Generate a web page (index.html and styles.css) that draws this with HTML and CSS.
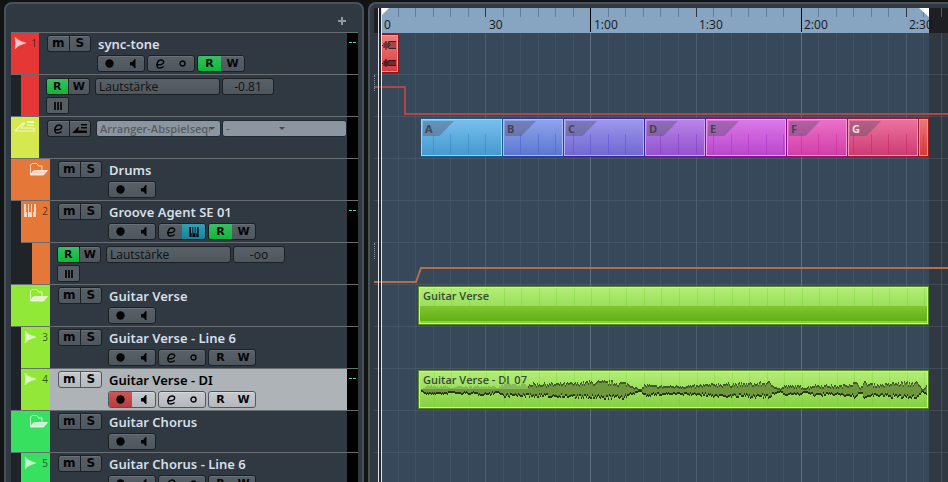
FILE: index.html
```html
<!DOCTYPE html>
<html lang="de">
<head>
<meta charset="utf-8">
<title>Projekt</title>
<link rel="stylesheet" href="styles.css">
</head>
<body>
<svg class="defs" aria-hidden="true">
  <symbol id="i-audio" viewBox="0 0 13 14"><path d="M1 1q3 4 11 6q-8 2-11 6q1.500-6 0-12z" fill="currentColor" stroke="rgba(255,255,255,.3)"/></symbol>
  <symbol id="i-folder" viewBox="0 0 19 14"><path d="M4.500 8.500L1.500 13V3l1.500-1.500h5L9.500 4H13v4.500" fill="none" stroke="currentColor"/><path d="M5.500 8.500h13L14.500 13h-13z" fill="currentColor" stroke="currentColor" stroke-linejoin="round"/></symbol>
  <symbol id="i-piano" viewBox="0 0 12 13"><path d="M0 0h2v8h1v5H0zM4 0h1v8h2V0h1v8h0v5H4zM10 0h2v13H9V8h1z" fill="currentColor"/></symbol>
  <symbol id="i-arr" viewBox="0 0 21 12"><path d="M1 11L9 3h2L7 8H20v3z" fill="none" stroke="currentColor" stroke-width="1.200" stroke-linejoin="round"/><path d="M13 1h7v2h-7zM13 4.500h7v1.500h-7z" fill="currentColor"/></symbol>
  <symbol id="i-arrs" viewBox="0 0 15 9"><path d="M0 9L6 3H7L6 6.500h9V9zM9 0h6v1.500H9zM9 3h6v1.500H9z" fill="currentColor"/></symbol>
  <symbol id="i-rec" viewBox="0 0 9 9"><circle cx="4.500" cy="4.500" r="4.200" fill="currentColor"/></symbol>
  <symbol id="i-spk" viewBox="0 0 6 9"><path d="M0 3h2.200L4.500 0H5.500v9H4.500L2.200 6.500H0z" fill="currentColor"/></symbol>
  <symbol id="i-edit" viewBox="0 0 10 10"><path d="M1 5.800Q8.500 6.300 8.700 3Q8.500 1 6 1Q3.500 1 2.300 3.800Q1 8.900 4.300 9Q7 9 8.600 7.500" fill="none" stroke="currentColor" stroke-width="1.500"/></symbol>
  <symbol id="i-ring" viewBox="0 0 7 7"><circle cx="3.500" cy="3.500" r="2.500" fill="none" stroke="currentColor" stroke-width="1.400"/></symbol>
  <symbol id="i-bars" viewBox="0 0 8 8"><path d="M0 0h2v8H0zM3 0h2v8H3zM6 0h2v8H6z" fill="currentColor"/></symbol>
</svg>

<main class="project">
<section class="panel tracklist" aria-label="Spuren">
  <header class="toolbar"><button class="add" aria-label="Spur hinzufügen"><svg viewBox="0 0 8 8"><path d="M4 0v8M0 4h8" stroke="currentColor" stroke-width="2"/></svg></button></header>

  <article class="track red">
    <div class="swatch short"><svg class="audio"><use href="#i-audio"/></svg><span>1</span></div>
    <div class="body">
      <div class="pair"><button>m</button><button>S</button></div>
      <div class="main">
        <h2>sync-tone</h2>
        <div class="groups">
          <div class="pair"><button aria-label="Aufnahme"><svg class="rec"><use href="#i-rec"/></svg></button><button aria-label="Monitor"><svg class="spk"><use href="#i-spk"/></svg></button></div>
          <div class="pair"><button aria-label="Bearbeiten"><svg class="edit"><use href="#i-edit"/></svg></button><button aria-label="Kanal"><svg class="ring"><use href="#i-ring"/></svg></button></div>
          <div class="pair"><button class="on">R</button><button>W</button></div>
        </div>
      </div>
    </div>
    <div class="meter active"></div>
  </article>

  <article class="track red">
    <div class="indent"></div>
    <div class="swatch narrow"></div>
    <div class="body auto">
      <div class="stack"><div class="pair split"><button class="on">R</button><button>W</button></div><button class="lanes" aria-label="Spuren"><svg class="bars"><use href="#i-bars"/></svg></button></div>
      <button class="param">Lautstärke</button><input class="value" aria-label="Lautstärke" value="-0.81">
    </div>
    <div class="meter"></div>
  </article>

  <article class="track yellow">
    <div class="swatch short"><svg class="arr"><use href="#i-arr"/></svg></div>
    <div class="body arranger">
      <div class="pair split"><button aria-label="Bearbeiten"><svg class="edit"><use href="#i-edit"/></svg></button><button aria-label="Arranger"><svg class="arrs"><use href="#i-arrs"/></svg></button></div>
      <div class="choice chain"><select aria-label="Arranger-Kette"><option>Arranger-Abspielsequenz</option></select></div>
      <div class="choice step"><select aria-label="Schritt"><option>-</option></select></div>
    </div>
    <div class="meter"></div>
  </article>

  <article class="track orange">
    <div class="swatch folder"><svg class="fold"><use href="#i-folder"/></svg></div>
    <div class="body">
      <div class="pair"><button>m</button><button>S</button></div>
      <div class="main">
        <h2>Drums</h2>
        <div class="groups"><div class="pair"><button aria-label="Aufnahme"><svg class="rec"><use href="#i-rec"/></svg></button><button aria-label="Monitor"><svg class="spk"><use href="#i-spk"/></svg></button></div></div>
      </div>
    </div>
    <div class="meter"></div>
  </article>

  <article class="track orange">
    <div class="indent"></div>
    <div class="swatch"><svg class="piano"><use href="#i-piano"/></svg><span>2</span></div>
    <div class="body">
      <div class="pair"><button>m</button><button>S</button></div>
      <div class="main">
        <h2>Groove Agent SE 01</h2>
        <div class="groups">
          <div class="pair"><button aria-label="Aufnahme"><svg class="rec"><use href="#i-rec"/></svg></button><button aria-label="Monitor"><svg class="spk"><use href="#i-spk"/></svg></button></div>
          <div class="pair"><button aria-label="Bearbeiten"><svg class="edit"><use href="#i-edit"/></svg></button><button class="keys" aria-label="Instrument"><svg class="key"><use href="#i-piano"/></svg></button></div>
          <div class="pair"><button class="on">R</button><button>W</button></div>
        </div>
      </div>
    </div>
    <div class="meter active"></div>
  </article>

  <article class="track orange">
    <div class="indent joined"></div><div class="indent inner"></div>
    <div class="swatch narrow"></div>
    <div class="body auto">
      <div class="stack"><div class="pair split"><button class="on">R</button><button>W</button></div><button class="lanes" aria-label="Spuren"><svg class="bars"><use href="#i-bars"/></svg></button></div>
      <button class="param">Lautstärke</button><input class="value" aria-label="Lautstärke" value="-oo">
    </div>
    <div class="meter"></div>
  </article>

  <article class="track lime">
    <div class="swatch folder"><svg class="fold"><use href="#i-folder"/></svg></div>
    <div class="body">
      <div class="pair"><button>m</button><button>S</button></div>
      <div class="main">
        <h2>Guitar Verse</h2>
        <div class="groups"><div class="pair"><button aria-label="Aufnahme"><svg class="rec"><use href="#i-rec"/></svg></button><button aria-label="Monitor"><svg class="spk"><use href="#i-spk"/></svg></button></div></div>
      </div>
    </div>
    <div class="meter"></div>
  </article>

  <article class="track lime">
    <div class="indent"></div>
    <div class="swatch"><svg class="audio"><use href="#i-audio"/></svg><span>3</span></div>
    <div class="body">
      <div class="pair"><button>m</button><button>S</button></div>
      <div class="main">
        <h2>Guitar Verse - Line 6</h2>
        <div class="groups">
          <div class="pair"><button aria-label="Aufnahme"><svg class="rec"><use href="#i-rec"/></svg></button><button aria-label="Monitor"><svg class="spk"><use href="#i-spk"/></svg></button></div>
          <div class="pair"><button aria-label="Bearbeiten"><svg class="edit"><use href="#i-edit"/></svg></button><button aria-label="Kanal"><svg class="ring"><use href="#i-ring"/></svg></button></div>
          <div class="pair"><button>R</button><button>W</button></div>
        </div>
      </div>
    </div>
    <div class="meter"></div>
  </article>

  <article class="track lime selected">
    <div class="indent joined"></div>
    <div class="swatch"><svg class="audio"><use href="#i-audio"/></svg><span>4</span></div>
    <div class="body">
      <div class="pair"><button>m</button><button>S</button></div>
      <div class="main">
        <h2>Guitar Verse - DI</h2>
        <div class="groups">
          <div class="pair"><button class="armed" aria-label="Aufnahme"><svg class="rec"><use href="#i-rec"/></svg></button><button aria-label="Monitor"><svg class="spk"><use href="#i-spk"/></svg></button></div>
          <div class="pair"><button aria-label="Bearbeiten"><svg class="edit"><use href="#i-edit"/></svg></button><button aria-label="Kanal"><svg class="ring"><use href="#i-ring"/></svg></button></div>
          <div class="pair"><button>R</button><button>W</button></div>
        </div>
      </div>
    </div>
    <div class="meter active"></div>
  </article>

  <article class="track green">
    <div class="swatch folder"><svg class="fold"><use href="#i-folder"/></svg></div>
    <div class="body">
      <div class="pair"><button>m</button><button>S</button></div>
      <div class="main">
        <h2>Guitar Chorus</h2>
        <div class="groups"><div class="pair"><button aria-label="Aufnahme"><svg class="rec"><use href="#i-rec"/></svg></button><button aria-label="Monitor"><svg class="spk"><use href="#i-spk"/></svg></button></div></div>
      </div>
    </div>
    <div class="meter"></div>
  </article>

  <article class="track green">
    <div class="indent"></div>
    <div class="swatch"><svg class="audio"><use href="#i-audio"/></svg><span>5</span></div>
    <div class="body">
      <div class="pair"><button>m</button><button>S</button></div>
      <div class="main">
        <h2>Guitar Chorus - Line 6</h2>
        <div class="groups">
          <div class="pair"><button aria-label="Aufnahme"><svg class="rec"><use href="#i-rec"/></svg></button><button aria-label="Monitor"><svg class="spk"><use href="#i-spk"/></svg></button></div>
          <div class="pair"><button aria-label="Bearbeiten"><svg class="edit"><use href="#i-edit"/></svg></button><button aria-label="Kanal"><svg class="ring"><use href="#i-ring"/></svg></button></div>
          <div class="pair"><button>R</button><button>W</button></div>
        </div>
      </div>
    </div>
    <div class="meter"></div>
  </article>
</section>

<section class="panel arrange" aria-label="Arrangement">
  <div class="canvas">
    <svg class="grid" aria-hidden="true"></svg>
    <div class="ruler"><span>0</span><span>30</span><span>1:00</span><span>1:30</span><span>2:00</span><span>2:30</span></div>
    <div class="lane"><div class="clip tone" data-start="0" data-width="18"><svg class="burst" viewBox="0 0 16 30"><path d="M0 8h3V6l2-2 2 2V4h8v8H7v-2l-2 2-2-2V8z" fill="#a34549"/><path d="M0 8.500h2M3 6v5M5 4v9M7 6v5M7 4.500l2 3-2 3M8 4.500h7M8 11.500h7" stroke="#33282b" fill="none"/><path d="M0 26h3v-2l2-2 2 2v-1h8v6H7v-1l-2 2-2-2v-2z" fill="#7c272c"/><path d="M0 26.500h2M3 24v5M5 22v8M7 24v5M8 23.500h7M8 28.500h7" stroke="#251c20" fill="none"/></svg></div></div>
    <div class="lane curve"><svg aria-hidden="true"><path d="M0 12H31V39H2000" stroke="#ad4848"/></svg></div>
    <div class="lane parts">
      <div class="part a" data-start="40" data-width="82">A</div>
      <div class="part b" data-start="122" data-width="61">B</div>
      <div class="part c" data-start="183" data-width="81">C</div>
      <div class="part d" data-start="264" data-width="61">D</div>
      <div class="part e" data-start="325" data-width="81">E</div>
      <div class="part f" data-start="406" data-width="61">F</div>
      <div class="part g" data-start="467" data-width="71">G</div>
      <div class="part h" data-start="538" data-width="10"></div>
    </div>
    <div class="lane"></div>
    <div class="lane"></div>
    <div class="lane curve"><svg aria-hidden="true"><path d="M0 39H42L47 25H2000" stroke="#b26f48"/></svg></div>
    <div class="lane"><div class="clip green-clip folded" data-start="37" data-width="511"><b>Guitar Verse</b></div></div>
    <div class="lane"></div>
    <div class="lane"><div class="clip green-clip" data-start="37" data-width="511"><svg id="wave" aria-hidden="true"></svg><b>Guitar Verse - DI_07</b></div></div>
    <div class="lane"></div>
    <div class="lane"></div>
    <div class="cursor"></div>
  </div>
</section>
</main>
<script src="app.js"></script>
</body>
</html>
```
FILE: styles.css
```css
* { box-sizing: border-box; }
body { margin: 0; background: #111412; font: 12px/16px "Open Sans", "Noto Sans", sans-serif; color: #111; overflow: hidden; }
button, input, select { font: inherit; color: inherit; margin: 0; padding: 0; border: 0; border-radius: 0; background: none; appearance: none; }
svg { display: block; overflow: visible; }
.defs { position: absolute; width: 0; height: 0; }

.project { display: flex; gap: 4px; height: 100vh; padding: 2px 0 0 4px; }
.panel { background: #303841; border: 2px solid #48525b; border-bottom: 0; border-radius: 8px 8px 0 0; overflow: hidden; }
.tracklist { flex: 0 0 360px; padding: 0 4px 0 5px; }
.toolbar { height: 28px; display: flex; justify-content: flex-end; align-items: flex-end; padding: 0 12px 7px 0; }
.add { width: 8px; height: 8px; color: #9099a0; }
.add svg { width: 8px; height: 8px; }

.track { display: flex; height: 42px; }
.swatch, .body, .meter, .indent { border-top: 1px solid #686d71; }
.indent { width: 10px; background: #1f2428; }
.inner { width: 11px; }
.joined { border-top-color: #1f2428; }
.swatch { width: 29px; background-color: var(--c); display: flex; justify-content: space-between; align-items: flex-start; padding: 3px 2px 0 3px; font-size: 10px; line-height: 14px; color: rgba(20, 30, 15, .75); }
.swatch.short { width: 28px; }
.swatch.narrow { width: 18px; }
.swatch.folder { width: 39px; justify-content: flex-end; }
.swatch svg { color: rgba(255, 255, 255, .7); }
.red { --c: #e63737; }
.yellow { --c: #d5e84e; }
.orange { --c: #e57838; }
.lime { --c: #91e837; }
.green { --c: #38e060; }
.audio { width: 13px; height: 14px; }
.fold { width: 19px; height: 14px; }
.piano { width: 12px; height: 13px; }
.arr { width: 21px; height: 12px; }

.body { flex: 1; min-width: 0; display: flex; gap: 6px; padding: 2px 0 0 8px; }
.body h2 { margin: 0; padding: 0 0 0 1px; font: 700 13px/18px "Noto Sans", "Open Sans", sans-serif; font-weight: 600; height: 20px; color: #d6dfe5; white-space: nowrap; }
.groups { display: flex; gap: 2px; }
.pair { display: flex; flex: none; width: 44px; height: 17px; border: 1px solid #1b2025; border-radius: 3px; background: linear-gradient(#596168, #4e565e); box-shadow: inset 0 1px #697077; overflow: hidden; }
.groups .pair { width: 48px; }
.pair button { flex: 1; display: flex; align-items: center; justify-content: center; font: 700 11px/15px "DejaVu Sans", sans-serif; color: #050607; }
.body > .pair button { font-size: 12px; }
.body > .pair button + button, .stack .pair button + button { border-left: 1px solid #1b2025; }
.pair .on { background: linear-gradient(#38c064, #0cb936); }
.pair .keys { background: linear-gradient(#369fb5, #16829b); }
.rec { width: 9px; height: 9px; }
.spk { width: 6px; height: 9px; }
.edit { width: 10px; height: 10px; }
.ring { width: 7px; height: 7px; }
.key { width: 12px; height: 10px; }
.bars { width: 8px; height: 8px; }
.arrs { width: 15px; height: 9px; }

.auto { gap: 5px; padding: 3px 0 0 7px; }
.stack { display: flex; flex-direction: column; gap: 2px; }
.lanes { width: 23px; height: 17px; display: grid; place-items: center; border: 1px solid #1b2025; border-radius: 2px; background: #555d65; }
.param, .value { height: 17px; border: 1px solid #1b2025; border-radius: 3px; background: linear-gradient(#596168, #4e565e); line-height: 15px; }
.param { width: 125px; padding-left: 3px; text-align: left; }
.value { width: 52px; margin-left: -3px; text-align: center; }

.arranger { gap: 1px; padding-top: 3px; }
.arranger .pair { margin-right: 4px; }
.choice { position: relative; flex: 1; min-width: 0; height: 17px; border: 1px solid #1d2b38; border-radius: 3px; background: #8d969e; color: #555c62; overflow: hidden; }
.choice select { display: block; width: 100%; height: 15px; padding: 0 10px 0 3px; line-height: 15px; font-size: 11px; font-weight: 600; }
.choice::after { content: ""; position: absolute; right: 5px; top: 6px; border: 3px solid transparent; border-top-color: #41484e; border-bottom: 0; }
.step::after { right: 61px; }

.meter { width: 11px; background: #000; padding: 9px 2px 0; }
.active::before { content: ""; display: block; height: 1px; background: linear-gradient(90deg, #31e5a4 3px, transparent 3px 4px, #31e5a4 4px); }

.selected .body { background: #adb3b7; }
.selected h2 { color: #000; }
.selected .pair { background: linear-gradient(#c6c9cd, #b5b9be); border-color: #50565c; box-shadow: inset 0 1px #d7dadd; }
.selected .body > .pair button + button { border-color: #50565c; }
.selected .armed { background: linear-gradient(#cf5555, #b93d40); }

.arrange { flex: 1; min-width: 0; padding: 4px 0 0 4px; border-right: 0; border-radius: 8px 0 0 0; }
.canvas { position: relative; height: 100%; overflow: hidden; }
.grid { position: absolute; inset: 0; width: 100%; height: 100%; }
.ruler { position: relative; display: flex; height: 25px; padding: 9px 0 0 10px; color: #15191d; }
.ruler span { flex: 0 0 105px; }
.lane { position: relative; display: flex; height: 42px; padding: 1px 0 0 7px; border-bottom: 1px solid rgba(90, 105, 120, .4); }
.curve { padding: 0; }
.curve::before { content: ""; position: absolute; left: 0; top: 0; height: 16px; border-left: 1px dotted #89929a; }
.curve svg { width: 100%; height: 41px; }
.curve path { fill: none; stroke-width: 2; }
.clip, .part { position: relative; height: 39px; overflow: hidden; }
.ticks { position: absolute; left: 0; bottom: 2px; width: 100%; height: 20px; }
.tone { padding-top: 1px; border: 1px solid #8e171e; border-left: 0; background: linear-gradient(#f07f80, #d9393a); box-shadow: inset 0 0 0 1px #f49a9a; }
.burst { width: 16px; height: 30px; margin-top: 1px; }
.parts { padding-left: 47px; }
.part { z-index: 0; padding: 2px 4px; background: linear-gradient(var(--t), var(--u)); border: 1px solid var(--k); border-left-width: 0; box-shadow: inset 0 0 0 1px var(--l); font-size: 11px; line-height: 15px; font-weight: 700; color: #454251; }
.part:not(.h)::before { content: ""; position: absolute; z-index: -1; left: 2px; top: 2px; width: 31px; height: 15px; background: rgba(75, 75, 95, .38); clip-path: polygon(0 0, 100% 0, 53% 100%, 0 100%); }
.part .ticks { opacity: .5; }
.a { --t: #79c0ec; --u: #4498cf; --k: #175d86; --l: #95d5f6; --tick: #2b87c6; }
.b { --t: #91a4ed; --u: #5977cf; --k: #263f9a; --l: #aebdf8; --tick: #4760cd; }
.c { --t: #9d98ee; --u: #7167d2; --k: #39268f; --l: #b5b0f7; --tick: #5f4cd0; }
.d { --t: #b885e8; --u: #9352cc; --k: #632096; --l: #cda0f4; --tick: #8236c4; }
.e { --t: #dc79e8; --u: #b746cb; --k: #82128b; --l: #ed9bf5; --tick: #ae2bc6; }
.f { --t: #ec71ca; --u: #d03ea7; --k: #92176b; --l: #f595d8; --tick: #ca2597; }
.g { --t: #ed739f; --u: #cc3b73; --k: #941c41; --l: #f394b3; --tick: #c82257; color: #f1dce5; }
.h { --t: #ed7779; --u: #d63a3c; --k: #9f1d15; --l: #f59186; --tick: #d03a20; }
.green-clip { --tick: rgba(100, 205, 20, .25); margin-left: 37px; padding: 1px 4px; border: 1px solid #588c20; background: linear-gradient(#b3ee78, #85d040); box-shadow: inset 0 0 0 1px #c0fa80; }
.green-clip b { position: relative; font-size: 11px; font-weight: 600; line-height: 15px; color: #38463a; display: block; }
.green-clip .ticks { height: 34px; }
.ticks rect { fill: var(--tick); }
.folded::before { content: ""; position: absolute; z-index: 1; left: 1px; right: 1px; top: 19px; height: 15px; background: linear-gradient(#80c532, #63b012); }
#wave { position: absolute; z-index: 1; left: 0; top: 0; width: 100%; height: 37px; }
.cursor { position: absolute; left: 4px; top: 0; bottom: 0; width: 4px; border: solid #e2e6e8; border-width: 0 1px; background: rgba(20, 25, 30, .4); }
```
FILE: app.js
```js
const NS = "http://www.w3.org/2000/svg";
const ORIGIN = 7, END = 555, STEP = 17.53, OFFSET = 6;

function add(parent, tag, attrs) {
  const node = document.createElementNS(NS, tag);
  for (const key in attrs) node.setAttribute(key, attrs[key]);
  parent.appendChild(node);
  return node;
}
const tickX = n => Math.round(OFFSET + n * STEP);

// Background, cycle range and time grid
const grid = document.querySelector(".grid");
add(grid, "rect", { x: 0, y: 0, width: "100%", height: 25, fill: "#1d1f23" });
add(grid, "rect", { x: ORIGIN, y: 25, width: END - ORIGIN, height: "100%", fill: "#37485a" });
add(grid, "rect", { x: ORIGIN, y: 0, width: END - ORIGIN, height: 25, fill: "#87a4c1" });
for (let n = 1; tickX(n) < window.innerWidth; n++) {
  const x = tickX(n), minute = n % 12 === 0, half = n % 6 === 0;
  add(grid, "rect", { x, y: 25, width: 1, height: "100%", fill: minute ? "#627180" : half ? "#4d5e6e" : "#415163" });
  add(grid, "rect", { x, y: 0, width: 1, height: minute ? 24 : 9, fill: minute ? "#05080b" : half ? "#2c3945" : x > END ? "#555a60" : "#667f99" });
}
add(grid, "path", { d: `M${ORIGIN} 0h8l-8 8zM${END} 0h-10l10 9z`, fill: "#fff" });

// Time grid shown through clips and parts
document.querySelectorAll("[data-start]").forEach(el => {
  const start = Number(el.dataset.start), width = Number(el.dataset.width);
  el.style.width = width + "px";
  if (el.classList.contains("tone")) return;
  const svg = add(el, "svg", { class: "ticks" });
  for (let n = 1; n < 33; n++) {
    const x = tickX(n) - ORIGIN - start;
    if (x > 2 && x < width - 2) add(svg, "rect", { x, y: 0, width: 1, height: "100%" });
  }
});

// Audio waveform: [x, half height] envelope with a repeatable jitter
const env = [[2, 1], [8, 4], [18, 3], [25, 4], [34, 2], [40, 4], [50, 3], [60, 4], [70, 4], [78, 2], [85, 6], [100, 5], [112, 6], [140, 6], [160, 7], [180, 8], [205, 7], [214, 4], [219, 1], [222, 1], [225, 5], [240, 4], [270, 4], [300, 6], [325, 6], [350, 7], [357, 3], [361, 1], [365, 4], [380, 4], [386, 2], [395, 5], [420, 4], [437, 7], [441, 3], [445, 7], [458, 5], [480, 7], [498, 7], [503, 1], [508, 5]];
let seed = 7;
const rnd = () => (seed = (seed * 16807) % 2147483647) / 2147483647;
let faded = "", fill = "", upper = "", lower = "";
for (let x = 2, k = 0; x < 508; x++) {
  while (env[k + 1][0] < x) k++;
  const [x0, a] = env[k], [x1, b] = env[k + 1];
  const amp = a + (b - a) * (x - x0) / (x1 - x0);
  const y0 = Math.round(19 - amp * (0.7 + rnd() * 0.6));
  const y1 = Math.round(20 + amp * (0.65 + rnd() * 0.6));
  if (x > 108) {
    fill += `M${x} ${y0}h1V${y1}h-1z`;
    upper += `M${x} ${y0}h1v2h-1z`;
  } else {
    faded += `M${x} ${y0}h1V18h-1z`;
    fill += `M${x} 18h1V${y1}h-1z`;
  }
  lower += `M${x} ${y1 - 2}h1v2h-1z`;
}
const wave = document.getElementById("wave");
add(wave, "path", { d: faded, fill: "#86b957" });
add(wave, "path", { d: fill, fill: "#6e983b" });
add(wave, "path", { d: upper, fill: "#45582f" });
add(wave, "path", { d: lower, fill: "#29381d" });
```
